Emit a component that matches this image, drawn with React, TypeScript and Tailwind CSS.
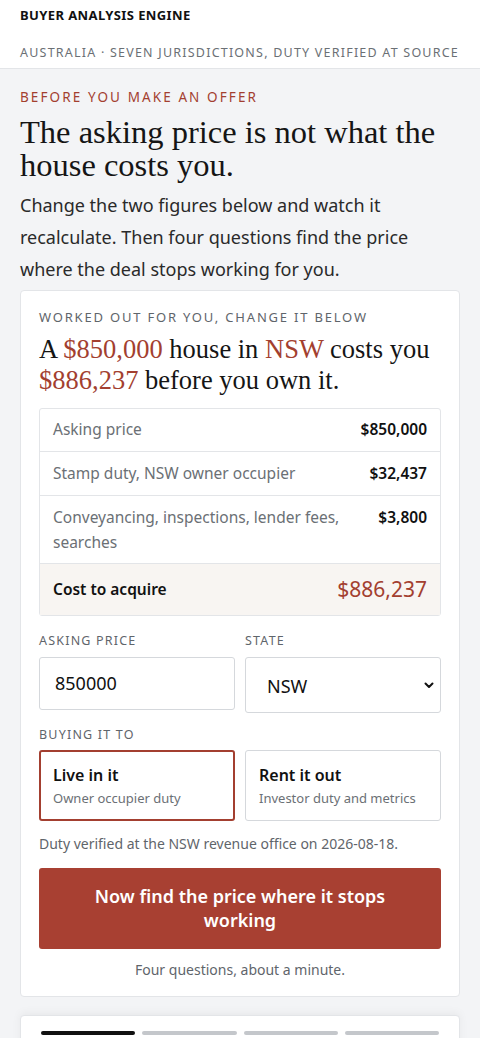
import React from "react";

const sans = { fontFamily: '"Noto Sans", "Open Sans", sans-serif' };
const serif = { fontFamily: '"Liberation Serif", "DejaVu Serif", serif' };

export default function App() {
  return (
    <div className="min-h-[1038px] bg-[#f3f4f6] text-[#1a1a1a]" style={sans}>
      <header className="bg-white border-b border-[#e3e5e8] px-5 pt-[6px] pb-[6px]">
        <div className="text-[13px] font-bold tracking-[0.4px] text-[#111]">BUYER ANALYSIS ENGINE</div>
        <div className="mt-[18px] whitespace-nowrap text-[12.5px] tracking-[1.22px] text-[#6b7075]">
          AUSTRALIA · SEVEN JURISDICTIONS, DUTY VERIFIED AT SOURCE
        </div>
      </header>

      <main className="px-5 pt-[18px]">
        <div className="text-[13.5px] tracking-[2.1px] text-[#a33f30]">BEFORE YOU MAKE AN OFFER</div>
        <h1 className="mt-[8px] text-[32.5px] leading-[33px] text-[#151515]" style={serif}>
          The asking price is not what the house costs you.
        </h1>
        <p className="mt-[7px] text-[18px] leading-[32px] text-[#2a2a2a]">
          Change the two figures below and watch it recalculate. Then four questions find the price where the deal stops working for you.
        </p>

        <section className="mt-[5px] bg-white border border-[#e3e5e8] rounded-[4px] px-[18px] pt-[17px] pb-[16px]">
          <div className="text-[13px] tracking-[1.8px] text-[#5f656b]">WORKED OUT FOR YOU, CHANGE IT BELOW</div>
          <div className="mt-[7px] text-[26.5px] leading-[31px] text-[#151515]" style={serif}>
            A <span className="text-[#a33f30]">$850,000</span> house in <span className="text-[#a33f30]">NSW</span> costs you{" "}
            <span className="text-[#a33f30]">$886,237</span> before you own it.
          </div>

          <div className="mt-[12px] border border-[#e3e5e8] rounded-[3px] text-[15.5px]">
            <div className="flex justify-between items-center px-[13px] h-[43px] border-b border-[#e3e5e8]">
              <span className="text-[#6b7075]">Asking price</span>
              <span className="font-semibold text-[#111]">$850,000</span>
            </div>
            <div className="flex justify-between items-center px-[13px] h-[44px] border-b border-[#e3e5e8]">
              <span className="text-[#6b7075]">Stamp duty, NSW owner occupier</span>
              <span className="font-semibold text-[#111]">$32,437</span>
            </div>
            <div className="flex justify-between items-start gap-4 px-[13px] pt-[9px] pb-[8px] leading-[25px] border-b border-[#e3e5e8]">
              <span className="text-[#6b7075] w-[290px]">Conveyancing, inspections, lender fees, searches</span>
              <span className="font-semibold text-[#111]">$3,800</span>
            </div>
            <div className="flex justify-between items-center px-[13px] h-[51px] bg-[#f8f5f2]">
              <span className="font-semibold text-[#111]">Cost to acquire</span>
              <span className="text-[21px] text-[#a33f30]">$886,237</span>
            </div>
          </div>

          <div className="mt-[16px] grid grid-cols-2 gap-[10px]">
            <div>
              <div className="text-[12.5px] tracking-[1.2px] text-[#5f656b]">ASKING PRICE</div>
              <div className="mt-[6px] h-[53px] border border-[#d5d8dc] rounded-[3px] flex items-center px-[15px] text-[18px] text-[#111]">
                850000
              </div>
            </div>
            <div>
              <div className="text-[12.5px] tracking-[1.2px] text-[#5f656b]">STATE</div>
              <div className="mt-[6px] h-[56px] border border-[#d5d8dc] rounded-[3px] flex items-center justify-between pl-[21px] pr-[5px] text-[18px] text-[#111]">
                <span className="mt-[3px]">NSW</span>
                <svg width="12" height="12" viewBox="0 0 12 12" className="mt-[1px]">
                  <path d="M2.5 4.5 L6 8 L9.5 4.5" fill="none" stroke="#111" strokeWidth="2" strokeLinecap="round" strokeLinejoin="round" />
                </svg>
              </div>
            </div>
          </div>

          <div className="mt-[13px] text-[12.5px] tracking-[1.2px] text-[#5f656b]">BUYING IT TO</div>
          <div className="mt-[5px] grid grid-cols-2 gap-[10px]">
            <div className="h-[71px] border-2 border-[#a33f30] rounded-[3px] px-[12px] pt-[12px]">
              <div className="text-[16px] font-semibold leading-[22px] text-[#111]">Live in it</div>
              <div className="mt-[3px] text-[13px] text-[#6b7075]">Owner occupier duty</div>
            </div>
            <div className="h-[71px] border border-[#d5d8dc] rounded-[3px] px-[13px] pt-[13px]">
              <div className="text-[16px] font-semibold leading-[22px] text-[#111]">Rent it out</div>
              <div className="mt-[3px] text-[13px] text-[#6b7075]">Investor duty and metrics</div>
            </div>
          </div>

          <div className="mt-[12px] text-[14px] text-[#5f656b]">Duty verified at the NSW revenue office on 2026-08-18.</div>

          <button className="mt-[14px] w-full h-[81px] bg-[#a84032] rounded-[3px] text-white text-[18px] font-semibold leading-[24px] px-10">
            Now find the price where it stops working
          </button>

          <div className="mt-[10px] text-center text-[14px] text-[#5f656b]">Four questions, about a minute.</div>
        </section>

        <section className="mt-[18px] bg-white border border-[#e3e5e8] rounded-t-[4px] shadow-[0_-2px_10px_rgba(0,0,0,0.05)] px-[20px] pt-[15px] h-[40px]">
          <div className="grid grid-cols-4 gap-[7px]">
            <div className="h-[4px] rounded-full bg-[#111]" />
            <div className="h-[4px] rounded-full bg-[#c4c7cb]" />
            <div className="h-[4px] rounded-full bg-[#c4c7cb]" />
            <div className="h-[4px] rounded-full bg-[#c4c7cb]" />
          </div>
        </section>
      </main>
    </div>
  );
}
